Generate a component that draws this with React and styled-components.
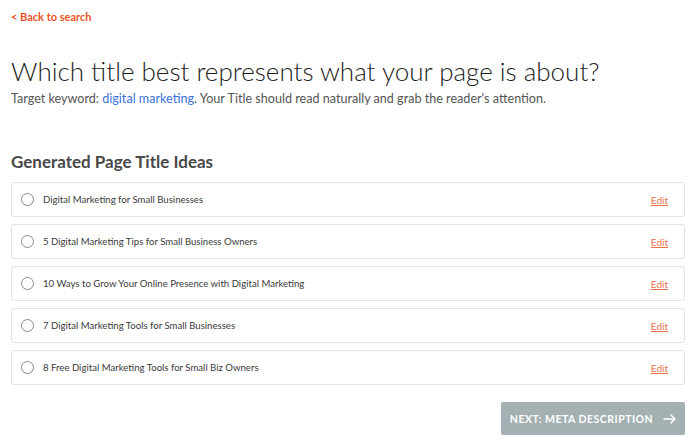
import React, { useState } from "react";
import styled, { createGlobalStyle } from "styled-components";

const titles = [
  "Digital Marketing for Small Businesses",
  "5 Digital Marketing Tips for Small Business Owners",
  "10 Ways to Grow Your Online Presence with Digital Marketing",
  "7 Digital Marketing Tools for Small Businesses",
  "8 Free Digital Marketing Tools for Small Biz Owners",
];

export default function App() {
  const [selected, setSelected] = useState(null);

  return (
    <>
      <GlobalStyle />
      <Page>
        <BackLink href="#">&lt; Back to search</BackLink>
        <Title>Which title best represents what your page is about?</Title>
        <Subtitle>
          Target keyword: <Keyword>digital marketing</Keyword>. Your Title
          should read naturally and grab the reader's attention.
        </Subtitle>

        <SectionTitle>Generated Page Title Ideas</SectionTitle>
        <List>
          {titles.map((t, i) => (
            <Card key={i} onClick={() => setSelected(i)}>
              <Radio $checked={selected === i} />
              <CardText>{t}</CardText>
              <EditLink href="#">Edit</EditLink>
            </Card>
          ))}
        </List>

        <Footer>
          <NextButton>
            NEXT: META DESCRIPTION
            <svg width="13" height="10" viewBox="0 0 13 10" fill="none">
              <path
                d="M1 5h11M8 1l4 4-4 4"
                stroke="#fff"
                strokeWidth="1.5"
                strokeLinecap="round"
                strokeLinejoin="round"
              />
            </svg>
          </NextButton>
        </Footer>
      </Page>
    </>
  );
}

const GlobalStyle = createGlobalStyle`
  body {
    margin: 0;
    background: #fff;
    font-family: "Lato", "Open Sans", sans-serif;
    color: #333;
  }
`;

const Page = styled.div`
  padding: 10px 15px 0 11px;
  display: flex;
  flex-direction: column;
`;

const BackLink = styled.a`
  font-size: 11px;
  font-weight: 700;
  color: #e8541f;
  text-decoration: none;
  line-height: 14px;
`;

const Title = styled.h1`
  margin: 30px 0 0;
  font-size: 26px;
  font-weight: 300;
  color: #1d1d1d;
  line-height: 34px;
`;

const Subtitle = styled.p`
  margin: 3px 0 0;
  font-size: 12.6px;
  color: #555;
  line-height: 16px;
`;

const Keyword = styled.span`
  color: #3d72de;
`;

const SectionTitle = styled.h2`
  margin: 45px 0 0;
  font-size: 17px;
  font-weight: 700;
  color: #484848;
  line-height: 20px;
`;

const List = styled.div`
  margin-top: 10px;
  display: flex;
  flex-direction: column;
  gap: 7px;
`;

const Card = styled.div`
  height: 35px;
  box-sizing: border-box;
  border: 1px solid #e3e3e3;
  border-radius: 3px;
  display: flex;
  align-items: center;
  padding: 0 16px 0 9px;
  cursor: pointer;
`;

const Radio = styled.span`
  width: 13px;
  height: 13px;
  box-sizing: border-box;
  border-radius: 50%;
  border: 1px solid ${(p) => (p.$checked ? "#e8541f" : "#8a8a8a")};
  background: ${(p) => (p.$checked ? "#e8541f" : "#fff")};
  flex-shrink: 0;
`;

const CardText = styled.span`
  margin-left: 9px;
  flex: 1;
  font-size: 9.6px;
  color: #3a3a3a;
`;

const EditLink = styled.a`
  font-size: 10px;
  color: #e8704a;
  text-decoration: underline;
`;

const Footer = styled.div`
  margin-top: 17px;
  display: flex;
  justify-content: flex-end;
`;

const NextButton = styled.button`
  width: 184px;
  height: 33px;
  padding: 0;
  border: none;
  border-radius: 2px;
  background: #a4b0b1;
  color: #fff;
  font-family: "Lato", sans-serif;
  font-size: 10.5px;
  font-weight: 700;
  letter-spacing: 0.5px;
  white-space: nowrap;
  display: flex;
  align-items: center;
  justify-content: center;
  gap: 10px;
  cursor: pointer;
`;
